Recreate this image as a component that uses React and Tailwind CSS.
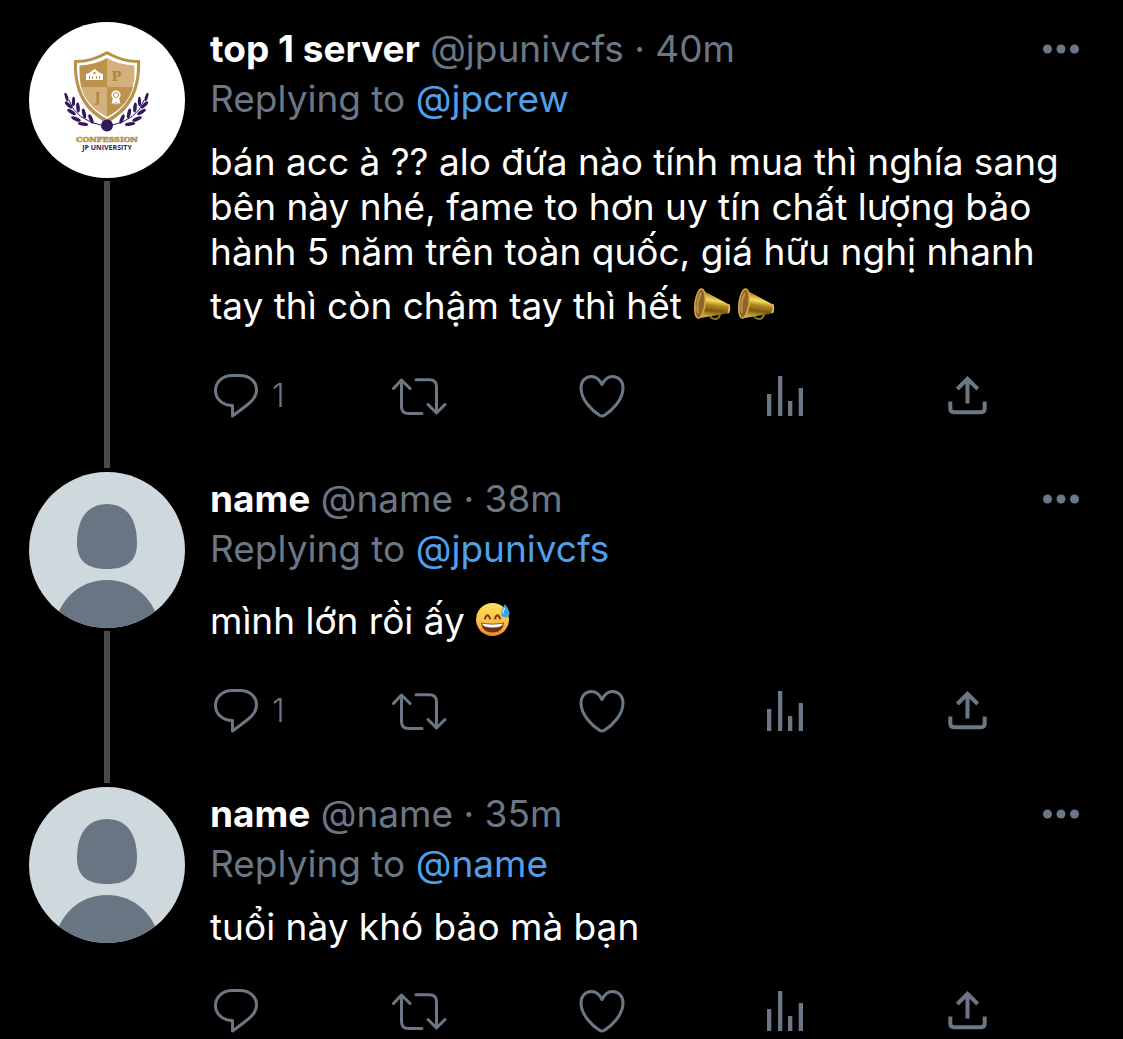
import React from "react";

const tweets = [
  {
    id: 1,
    name: "top 1 server",
    handle: "@jpunivcfs",
    time: "40m",
    replyTo: "@jpcrew",
    text: "bán acc à ?? alo đứa nào tính mua thì nghía sang\nbên này nhé, fame to hơn uy tín chất lượng bảo\nhành 5 năm trên toàn quốc, giá hữu nghị nhanh\ntay thì còn chậm tay thì hết ",
    emojis: ["megaphone", "megaphone"],
    replies: 1,
    avatar: "school",
  },
  {
    id: 2,
    name: "name",
    handle: "@name",
    time: "38m",
    replyTo: "@jpunivcfs",
    text: "mình lớn rồi ấy ",
    emojis: ["sweat"],
    replies: 1,
  },
  {
    id: 3,
    name: "name",
    handle: "@name",
    time: "35m",
    replyTo: "@name",
    text: "tuổi này khó bảo mà bạn",
    emojis: [],
    replies: 0,
  },
];

const icons = {
  Reply: (
    <path d="M20 3.5H28C37.5 3.5 44.5 9.5 44.5 18C44.5 24.5 40.5 28.7 36 32.2C31 36.2 26 40 20.5 44V33.5C10.5 33.5 3.5 27 3.5 18.5C3.5 10 10.5 3.5 20 3.5Z" />
  ),
  Retweet: (
    <path d="M6.5 8V34.500Q6.500 41.500 13.500 41.500H27M-1.500 16.500L6.500 8L15 16.500M21 7.700H34.500Q41.500 7.700 41.500 14.700V41M33 32.500L41.500 41L50 32.500" />
  ),
  Like: (
    <path d="M24 12.500C21.500 7.500 17.500 4.500 13.500 4.500C7 4.500 3 9.500 3 16C3 28 14.500 39 21.500 43.300Q24 44.700 26.500 43.300C33.500 39 45 28 45 16C45 9.500 41 4.500 34.500 4.500C30.500 4.500 26.500 7.500 24 12.500Z" />
  ),
  Analytics: (
    <path
      d="M6 22h4.300v22H6zM17 4h4.300v40H17zM27 29h4.300v15H27zM37.700 16h4.300v28h-4.300z"
      fill="currentColor"
      stroke="none"
    />
  ),
  Share: (
    <path
      d="M23.500 7V31.500M13.300 17L23.500 6.800L33.700 17M6.300 29.500V36.500Q6.300 40.200 10 40.200H37Q40.700 40.200 40.700 36.500V29.500"
      strokeWidth="4"
      strokeLinecap="butt"
      strokeLinejoin="miter"
    />
  ),
};

function Leaves() {
  return (
    <g fill="#33175f">
      <path d="M40 78Q46 98 75 104" fill="none" stroke="#33175f" strokeWidth="1" />
      <ellipse cx="37.500" cy="75" rx="1.500" ry="4.500" transform="rotate(-18 37.500 75)" />
      <ellipse cx="39.500" cy="83" rx="1.700" ry="4.800" transform="rotate(-46 39.500 83)" />
      <ellipse cx="44.500" cy="79.500" rx="1.600" ry="4.800" transform="rotate(2 44.500 79.500)" />
      <ellipse cx="42.500" cy="90" rx="1.800" ry="5" transform="rotate(-56 42.500 90)" />
      <ellipse cx="49" cy="85.500" rx="1.800" ry="5" transform="rotate(-6 49 85.500)" />
      <ellipse cx="47" cy="97" rx="1.800" ry="5.200" transform="rotate(-66 47 97)" />
      <ellipse cx="55" cy="91.500" rx="1.800" ry="5" transform="rotate(-14 55 91.500)" />
      <ellipse cx="54" cy="102" rx="1.800" ry="5.200" transform="rotate(-82 54 102)" />
      <ellipse cx="62" cy="97" rx="1.800" ry="5" transform="rotate(-24 62 97)" />
    </g>
  );
}

function SchoolAvatar() {
  return (
    <svg viewBox="0 0 156 156" className="block size-[156px]" role="img" aria-label="JP University Confession">
      <circle cx="78" cy="78" r="78" fill="#fff" />
      <Leaves />
      <g transform="translate(155 0) scale(-1 1)">
        <Leaves />
      </g>
      <path d="M78 29Q95 39 111 38C112 62 106 87 78 101C50 87 44 62 45 38Q61 39 78 29Z" fill="#b5934f" />
      <path d="M78 32.500Q94 41 108 41C108.500 63 102 84 78 97C54 84 47.500 63 48 41Q62 41 78 32.500Z" fill="#fff" />
      <path d="M78 36V65H52Q50 55 50.500 43.500Q66 43 78 36Z" fill="#bd924c" />
      <path d="M78 36Q90 43 105.500 43.500Q106 55 104 65H78Z" fill="#d3b17c" />
      <path d="M52 65H78V95Q57 84 52 65Z" fill="#d3b17c" />
      <path d="M104 65H78V95Q99 84 104 65Z" fill="#bd924c" />
      <path d="M57 58V52L60 51L65.500 47L71 51L74 52V58Z" fill="#fff" />
      <path d="M60.500 54v3M63.500 54v3M67.500 54v3M70.500 54v3" stroke="#bd924c" strokeWidth="1" />
      <circle cx="65.500" cy="51" r="1.200" fill="#bd924c" />
      <text x="87.500" y="59" textAnchor="middle" fontSize="13" fontWeight="700" fill="#b08642" className="font-['DejaVu_Serif',serif]">P</text>
      <text x="68.500" y="80" textAnchor="middle" fontSize="13" fontWeight="700" fill="#b08642" className="font-['DejaVu_Serif',serif]">J</text>
      <path d="M84 76L82.500 82L85 81L86 83L87.500 77ZM90 76L91.500 82L89 81L88 83L86.500 77Z" fill="#fff" />
      <circle cx="87" cy="73" r="4.600" fill="#fff" />
      <circle cx="87" cy="73" r="2.500" fill="none" stroke="#bd924c" strokeWidth="1" />
      <circle cx="78" cy="103.500" r="6" fill="#33175f" />
      <text x="78" y="120" textAnchor="middle" fontSize="8" fontWeight="700" fill="#b5934f" stroke="#b5934f" strokeWidth="0.600" className="font-['DejaVu_Serif',serif]">CONFESSION</text>
      <text x="78" y="128" textAnchor="middle" fontSize="7" fontWeight="700" fill="#33175f" className="font-['Open_Sans',sans-serif]">JP UNIVERSITY</text>
    </svg>
  );
}

function DefaultAvatar() {
  return (
    <svg viewBox="0 0 156 156" className="block size-[156px] rounded-full bg-[#cfd8dc]" role="img" aria-label="Default profile">
      <path
        d="M78 32C97 32 108 46 108 71C108 89 98 97 78 97C58 97 48 89 48 71C48 46 59 32 78 32Z"
        fill="#687684"
      />
      <path d="M26 156C28 130 49 108 78 108C107 108 128 130 130 156Z" fill="#687684" />
    </svg>
  );
}

function Megaphone() {
  return (
    <svg viewBox="0 0 40 36" className="h-9 w-10" role="img" aria-label="megaphone">
      <defs>
        <linearGradient id="brass" x1="0.500" y1="0" x2="0.350" y2="1">
          <stop offset="0" stopColor="#8a6420" />
          <stop offset="0.220" stopColor="#c29a30" />
          <stop offset="0.400" stopColor="#f4dc66" />
          <stop offset="0.550" stopColor="#b48a22" />
          <stop offset="0.750" stopColor="#7a5a12" />
          <stop offset="1" stopColor="#d8b848" />
        </linearGradient>
      </defs>
      <path d="M17 28Q19 33.500 24 33Q28 32 28 27" fill="none" stroke="#8d7436" strokeWidth="2" />
      <path d="M8 3L36 18Q39 20 38 25Q38 28 35 27.500L8 32Z" fill="url(#brass)" />
      <ellipse cx="8" cy="17.500" rx="5" ry="14.700" transform="rotate(7 8 17.500)" fill="#8f6527" stroke="#d7ac43" strokeWidth="1.500" />
      <path d="M9 7Q4 16 6 27" fill="none" stroke="#bd9149" strokeWidth="2" />
      <path d="M36.500 18Q38.500 22 36 27" fill="none" stroke="#e3c65b" strokeWidth="1.500" />
    </svg>
  );
}

function SweatSmile() {
  return (
    <svg viewBox="0 0 36 36" className="h-9 w-9" role="img" aria-label="grinning face with sweat">
      <defs>
        <linearGradient id="face" x1="0" y1="0" x2="0" y2="1">
          <stop offset="0" stopColor="#ffe25b" />
          <stop offset="0.600" stopColor="#fbbd3f" />
          <stop offset="1" stopColor="#e88a27" />
        </linearGradient>
      </defs>
      <circle cx="17.500" cy="18.500" r="16.500" fill="url(#face)" />
      <path d="M10 17.500Q12.500 11 15 17.500M20 17.500Q22.500 11 25 17.500" fill="none" stroke="#6b3d12" strokeWidth="2" strokeLinecap="round" />
      <path d="M6 21.500Q17.500 24 29 21.500Q28 31.500 17.500 31.500Q7 31.500 6 21.500Z" fill="#6e3216" />
      <path d="M7 22.500Q17.500 24.500 28 22.500Q27.500 26.500 17.500 26.500Q7.500 26.500 7 22.500Z" fill="#fff" />
      <path d="M30 3Q34.500 9 34.500 12.500Q34 16.500 30 16.500Q26 16 26 12.500Q26.500 8 30 3Z" fill="#3fa3ea" />
      <path d="M28 12Q28 9.500 29.500 7.500" fill="none" stroke="#b9e4ff" strokeWidth="1.500" strokeLinecap="round" />
    </svg>
  );
}

function Action({ label, count }) {
  return (
    <button type="button" aria-label={label} className="flex h-12 items-center gap-2">
      <svg
        viewBox="-4 0 56 48"
        className="h-12 w-14 shrink-0"
        fill="none"
        stroke="currentColor"
        strokeWidth="3"
        strokeLinecap="round"
        strokeLinejoin="round"
      >
        {icons[label]}
      </svg>
      {count > 0 && <span className="text-[32px] leading-none font-light">{count}</span>}
    </button>
  );
}

function Tweet({ tweet, last }) {
  return (
    <article className="flex gap-[25px]">
      <div className="flex shrink-0 flex-col items-center">
        {tweet.avatar === "school" ? <SchoolAvatar /> : <DefaultAvatar />}
        {!last && <div className="mt-[3px] mb-1 w-1.5 flex-1 bg-[#4a4a4a]" />}
      </div>

      <div className={`min-w-0 flex-1 pt-0.5 ${last ? "" : "pb-[52px]"}`}>
        <header className="flex items-center justify-between leading-[50px]">
          <p className="whitespace-nowrap">
            <strong className="font-bold text-white">{tweet.name}</strong> {tweet.handle} · {tweet.time}
          </p>
          <button type="button" aria-label="More">
            <svg viewBox="0 0 38 12" className="block h-3 w-[38px]" fill="currentColor">
              <circle cx="5.500" cy="6" r="4.500" />
              <circle cx="19" cy="6" r="4.500" />
              <circle cx="32.500" cy="6" r="4.500" />
            </svg>
          </button>
        </header>
        <p className="leading-[50px]">
          Replying to <a href="#" className="text-[#509fe8]">{tweet.replyTo}</a>
        </p>

        <p className="mt-[15px] leading-[45px] whitespace-pre-line text-white">
          {tweet.text}
          {tweet.emojis.length > 0 && (
            <span className="inline-flex h-[60px] items-center gap-1 align-[-3px]">
              {tweet.emojis.map((emoji, i) => (emoji === "megaphone" ? <Megaphone key={i} /> : <SweatSmile key={i} />))}
            </span>
          )}
        </p>

        <div className="mt-[38px] -ml-0.5 grid grid-cols-[repeat(4,minmax(0,1fr))_56px] pr-[84px]">
          <Action label="Reply" count={tweet.replies} />
          <Action label="Retweet" />
          <Action label="Like" />
          <Action label="Analytics" />
          <Action label="Share" />
        </div>
      </div>
    </article>
  );
}

export default function App() {
  return (
    <main className="min-h-screen bg-black pt-[22px] pr-[43px] pl-[29px] font-[Inter,sans-serif] text-[37px] text-[#6b7785]">
      {tweets.map((tweet, i) => (
        <Tweet key={tweet.id} tweet={tweet} last={i === tweets.length - 1} />
      ))}
    </main>
  );
}
